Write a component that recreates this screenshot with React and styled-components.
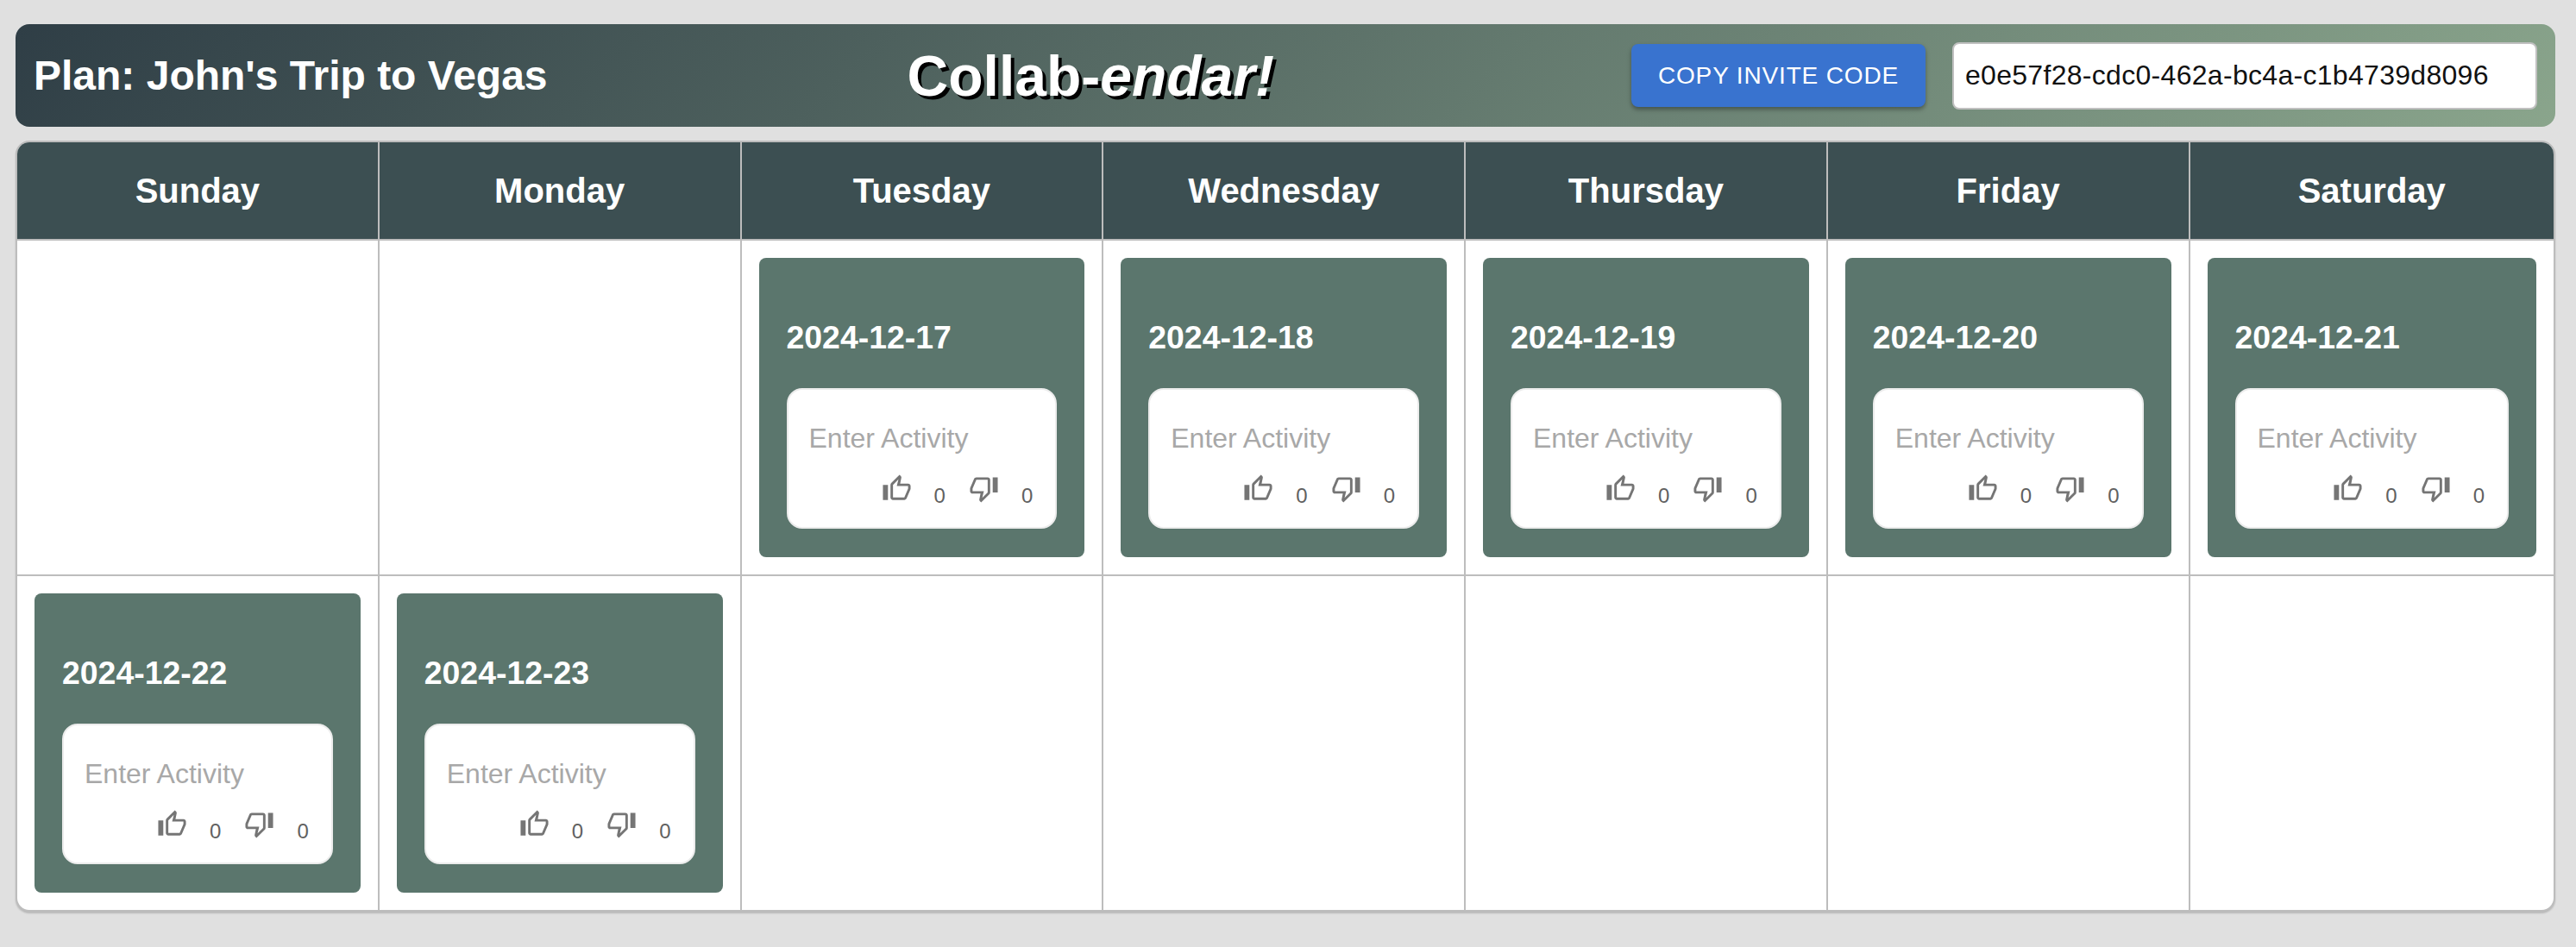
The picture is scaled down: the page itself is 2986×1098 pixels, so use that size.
import React from 'react';
import styled, { createGlobalStyle } from 'styled-components';

const GlobalStyle = createGlobalStyle`
  html, body {
    margin: 0;
    padding: 0;
    background: #e0e0e0;
  }
  * {
    box-sizing: border-box;
  }
`;

const Page = styled.div`
  min-height: 1098px;
  padding: 28px 24px 0 18px;
  background: #e0e0e0;
  font-family: "Liberation Sans", Arial, sans-serif;
`;

const Header = styled.header`
  height: 119px;
  padding: 0 21px 0 21px;
  display: flex;
  align-items: center;
  justify-content: space-between;
  border-radius: 16px;
  background: linear-gradient(135deg, #2f3e46 0%, #8aa58c 100%);
  color: #fff;
`;

const PlanName = styled.h2`
  margin: 0;
  font-size: 48px;
  font-weight: 700;
  color: #fff;
`;

const Brand = styled.h1`
  margin: 0 0 0 3px;
  font-size: 66px;
  font-weight: 700;
  color: #fff;
  text-shadow: 4px 4px 0 #000;

  em {
    font-style: italic;
  }
`;

const InviteControls = styled.div`
  display: flex;
  align-items: center;
  gap: 31px;
`;

const CopyButton = styled.button`
  width: 341px;
  height: 73px;
  border: 0;
  border-radius: 8px;
  background: #3973cf;
  color: #fff;
  font-family: inherit;
  font-size: 28px;
  letter-spacing: 0.85px;
  box-shadow: 0 3px 5px rgba(0, 0, 0, 0.35);
`;

const CodeInput = styled.input`
  width: 678px;
  height: 78px;
  padding: 0 13px;
  border: 2px solid #c0c0c0;
  border-radius: 8px;
  background: #fff;
  color: #111;
  font-family: inherit;
  font-size: 32px;
  letter-spacing: 0.3px;
  outline: none;
`;

const Calendar = styled.section`
  margin-top: 16px;
  border: 2px solid #bdbdbd;
  border-radius: 16px;
  overflow: hidden;
  background: #fff;
  box-shadow: 0 2px 2px rgba(0, 0, 0, 0.18);
`;

const WeekGrid = styled.div`
  display: grid;
  grid-template-columns: repeat(6, 419.75px) 1fr;
`;

const DayName = styled.div`
  height: 114px;
  display: flex;
  align-items: center;
  justify-content: center;
  background: #3c4f52;
  color: #fff;
  font-size: 40px;
  font-weight: 700;
  border-bottom: 2px solid #bdbdbd;
  border-right: ${props => (props.$last ? '0' : '2px solid #bdbdbd')};
`;

const DayCell = styled.div`
  height: ${props => (props.$lastRow ? '387px' : '389px')};
  padding: 20px;
  border-right: ${props => (props.$last ? '0' : '2px solid #bdbdbd')};
  border-bottom: ${props => (props.$lastRow ? '0' : '2px solid #bdbdbd')};
`;

const DayCard = styled.div`
  height: 347px;
  padding: 32px;
  border-radius: 8px;
  background: #5b766d;
`;

const DateLabel = styled.h3`
  margin: 39px 0 37px;
  font-size: 37.44px;
  font-weight: 700;
  color: #fff;
`;

const ActivityBox = styled.div`
  height: 163px;
  padding: 36px 26px 0 24px;
  border: 2px solid #ececec;
  border-radius: 18px;
  background: #fff;
`;

const ActivityInput = styled.input`
  width: 100%;
  height: 40px;
  padding: 0;
  border: 0;
  outline: none;
  font-family: inherit;
  font-size: 32px;
  background: transparent;

  &::placeholder {
    color: #a8a8a8;
    opacity: 1;
  }
`;

const VoteRow = styled.div`
  margin-top: 21px;
  display: flex;
  justify-content: flex-end;
  gap: 27px;
`;

const Vote = styled.div`
  display: flex;
  align-items: flex-end;
  gap: 26px;
`;

const VoteIcon = styled.svg`
  width: 35px;
  height: 35px;
  display: block;
  fill: #757575;
`;

const VoteCount = styled.span`
  margin-bottom: -5px;
  font-size: 24px;
  line-height: 28px;
  color: #616161;
`;

const THUMB_UP = 'M9 21h9c.83 0 1.54-.5 1.84-1.22l3.02-7.05c.09-.23.14-.47.14-.73v-2c0-1.1-.9-2-2-2h-6.31l.95-4.57.03-.32c0-.41-.17-.79-.44-1.06L14.17 1 7.58 7.59C7.22 7.95 7 8.45 7 9v10c0 1.1.9 2 2 2zM9 9l4.34-4.34L12 10h9v2l-3 7H9V9zM1 9h4v12H1z';
const THUMB_DOWN = 'M15 3H6c-.83 0-1.54.5-1.84 1.22l-3.02 7.05c-.09.23-.14.47-.14.73v2c0 1.1.9 2 2 2h6.31l-.95 4.57-.03.32c0 .41.17.79.44 1.06L9.83 23l6.59-6.59c.36-.36.58-.86.58-1.41V5c0-1.1-.9-2-2-2zm0 12-4.34 4.34L12 14H3v-2l3-7h9v10zm4-12h4v12h-4z';

const DAYS = ['Sunday', 'Monday', 'Tuesday', 'Wednesday', 'Thursday', 'Friday', 'Saturday'];

const WEEKS = [
  [null, null, '2024-12-17', '2024-12-18', '2024-12-19', '2024-12-20', '2024-12-21'],
  ['2024-12-22', '2024-12-23', null, null, null, null, null]
];

const VoteButton = ({ path }) => (
  <Vote>
    <VoteIcon viewBox="0 0 24 24">
      <path d={path} />
    </VoteIcon>
    <VoteCount>0</VoteCount>
  </Vote>
);

const Day = ({ date }) => (
  <DayCard>
    <DateLabel>{date}</DateLabel>
    <ActivityBox>
      <ActivityInput placeholder="Enter Activity" />
      <VoteRow>
        <VoteButton path={THUMB_UP} />
        <VoteButton path={THUMB_DOWN} />
      </VoteRow>
    </ActivityBox>
  </DayCard>
);

export default function App() {
  return (
    <Page>
      <GlobalStyle />
      <Header>
        <PlanName>Plan: John's Trip to Vegas</PlanName>
        <Brand>Collab-<em>endar!</em></Brand>
        <InviteControls>
          <CopyButton>COPY INVITE CODE</CopyButton>
          <CodeInput readOnly value="e0e57f28-cdc0-462a-bc4a-c1b4739d8096" />
        </InviteControls>
      </Header>
      <Calendar>
        <WeekGrid>
          {DAYS.map((name, i) => (
            <DayName key={name} $last={i === 6}>{name}</DayName>
          ))}
          {WEEKS.map((week, w) =>
            week.map((date, d) => (
              <DayCell key={`${w}-${d}`} $last={d === 6} $lastRow={w === WEEKS.length - 1}>
                {date && <Day date={date} />}
              </DayCell>
            ))
          )}
        </WeekGrid>
      </Calendar>
    </Page>
  );
}
